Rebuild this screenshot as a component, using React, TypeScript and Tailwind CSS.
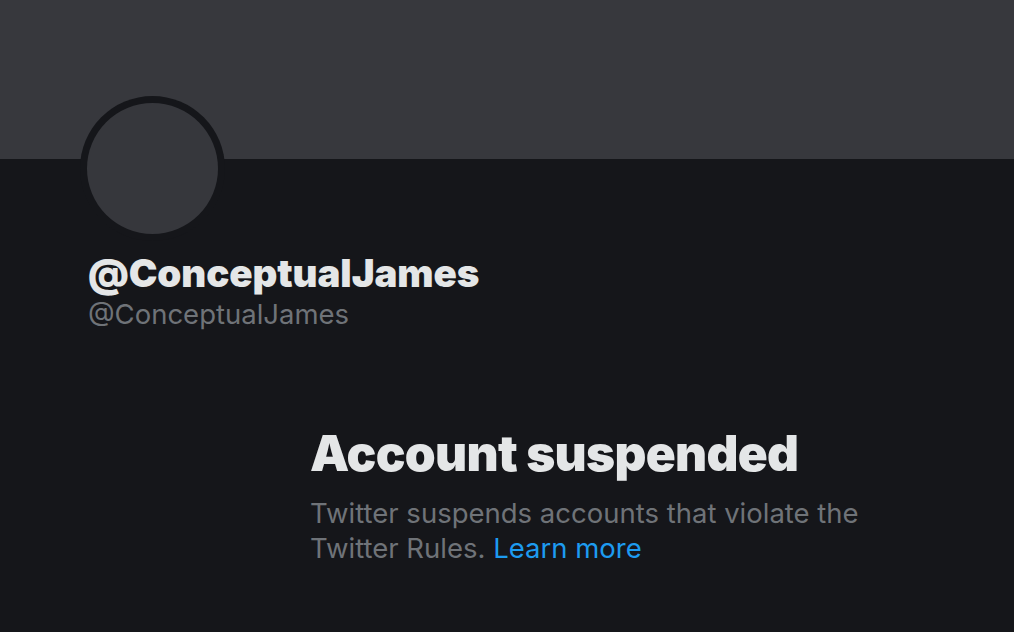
export default function App() {
  return (
    <div className="w-[1014px] h-[632px] overflow-hidden bg-[#15161a] font-['Inter','Liberation_Sans',sans-serif]">
      {/* Banner */}
      <div className="h-[159px] bg-[#37383d]" />

      {/* Profile header */}
      <div className="pl-[80px]">
        <div className="-mt-[63px] w-[145px] h-[145px] rounded-full bg-[#15161a] p-[7px]">
          <div className="w-full h-full rounded-full bg-[#36373c]" />
        </div>
        <div className="pl-[8px] mt-[10px]">
          <h1 className="text-[38.5px] leading-[44px] font-black text-[#e4e6e7] tracking-[-0.1px]">
            @ConceptualJames
          </h1>
          <p className="mt-[2px] text-[27.5px] leading-[34px] text-[#6f7378]">@ConceptualJames</p>
        </div>
      </div>

      {/* Suspension notice */}
      <div className="pl-[310px] mt-[93px]">
        <h2 className="text-[49.5px] leading-[58px] font-black text-[#e4e6e7] tracking-[-0.7px]">
          Account suspended
        </h2>
        <p className="mt-[14px] w-[580px] text-[27.5px] leading-[35px] text-[#6f7378]">
          Twitter suspends accounts that violate the Twitter Rules.{" "}
          <span className="text-[#1d9bf0]">Learn more</span>
        </p>
      </div>
    </div>
  );
}
